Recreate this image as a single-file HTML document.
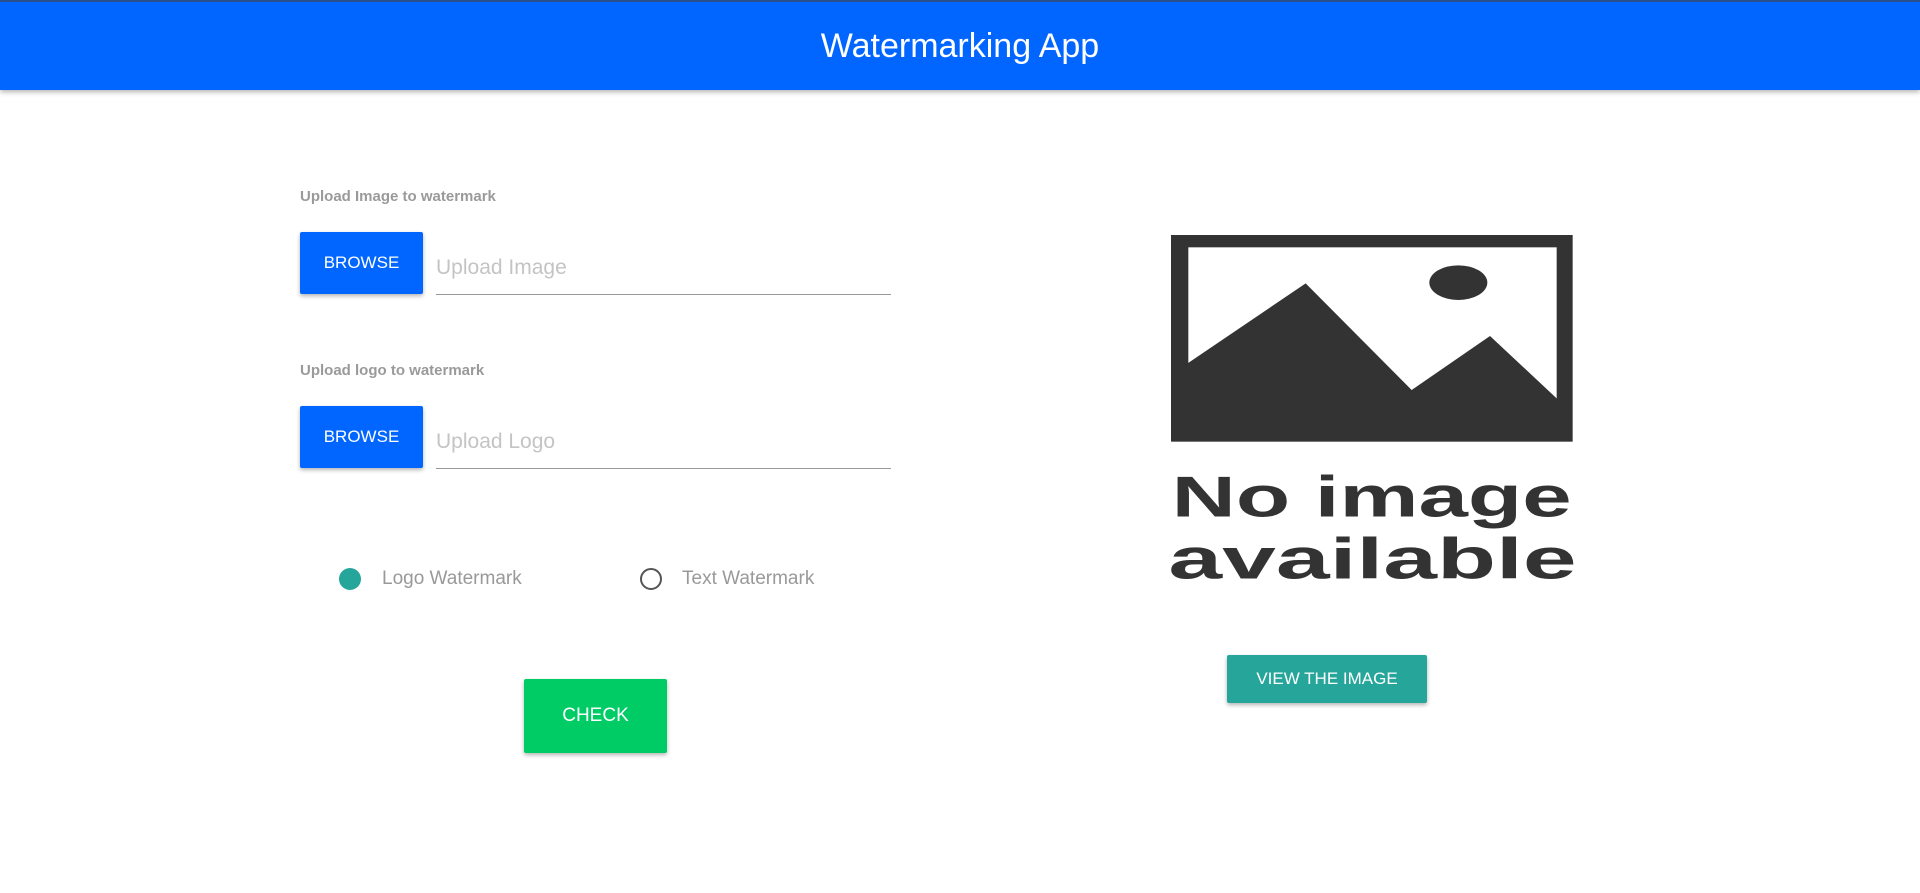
<!DOCTYPE html>
<html><head><style>
body{margin:0;width:1920px;height:893px;background:#fff;font-family:"Liberation Sans",sans-serif;position:relative;overflow:hidden}
.hdr{position:absolute;left:0;top:0;width:1920px;height:90px;background:#0066ff;border-top:2px solid #2a4f8a;box-sizing:border-box;box-shadow:0 2px 5px rgba(0,0,0,.3)}
.hdr div{color:#fff;font-size:34px;text-align:center;line-height:88px}
.lbl{position:absolute;left:300px;font-size:15px;font-weight:bold;color:#9a9a9a}
.btn{position:absolute;color:#fff;font-size:17px;display:flex;align-items:center;justify-content:center;border-radius:2px;box-shadow:0 2px 4px rgba(0,0,0,.3)}
.b{left:300px;width:123px;height:62px;background:#0066ff}
.inp{position:absolute;left:436px;width:455px;border-bottom:1px solid #999;height:40px;font-size:21px;color:#c4c4c4;line-height:28px}
.rad{position:absolute;width:18px;height:18px;border-radius:50%;top:568px}
.rt{position:absolute;top:568px;font-size:19px;color:#999}
</style></head><body>
<div class="hdr"><div>Watermarking App</div></div>
<div class="lbl" style="top:188px">Upload Image to watermark</div>
<div class="btn b" style="top:232px">BROWSE</div>
<div class="inp" style="top:254px">Upload Image</div>
<div class="lbl" style="top:362px">Upload logo to watermark</div>
<div class="btn b" style="top:406px">BROWSE</div>
<div class="inp" style="top:428px">Upload Logo</div>
<div class="rad" style="left:339px;width:22px;height:22px;background:#26a69a"></div>
<div class="rt" style="left:382px">Logo Watermark</div>
<div class="rad" style="left:640px;border:2px solid #555"></div>
<div class="rt" style="left:682px">Text Watermark</div>
<div class="btn" style="left:524px;top:679px;width:143px;height:74px;background:#00cc66;font-size:19px">CHECK</div>
<div class="btn" style="left:1227px;top:655px;width:200px;height:48px;background:#26a69a;font-size:17px">VIEW THE IMAGE</div>
<svg style="position:absolute;left:1140px;top:220px" width="460" height="370" viewBox="0 0 1380 1110">
<rect x="93" y="45" width="1205" height="620" fill="#333"/>
<rect x="145" y="82" width="1105" height="460" fill="#fff"/>
<polygon points="140,432 497,190 815,510 1050,348 1250,535 1255,550 140,550" fill="#333"/>
<ellipse cx="955" cy="188" rx="87" ry="52" fill="#333"/>
<text x="95" y="890" font-family="Liberation Sans" font-weight="bold" font-size="172" fill="#333" textLength="1200" lengthAdjust="spacingAndGlyphs">No image</text>
<text x="85" y="1075" font-family="Liberation Sans" font-weight="bold" font-size="172" fill="#333" textLength="1225" lengthAdjust="spacingAndGlyphs">available</text>
</svg>
</body></html>
